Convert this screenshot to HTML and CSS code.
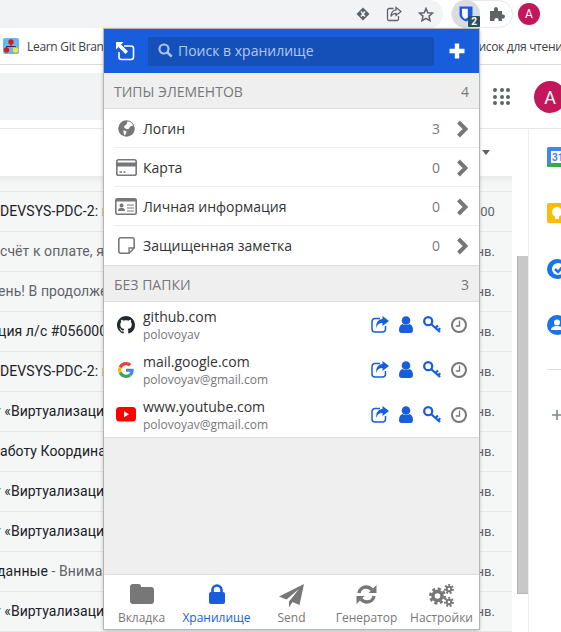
FILE: index.html
```html
<!DOCTYPE html>
<html lang="ru">
<head>
<meta charset="utf-8">
<title>Bitwarden</title>
<link rel="stylesheet" href="styles.css">
</head>
<body>
<svg class="defs" width="0" height="0">
  <defs>
    <symbol id="chev" viewBox="0 0 12 18"><path d="M2.500 2 9.500 9 2.500 16" fill="none" stroke="currentColor" stroke-width="4"/></symbol>
    <symbol id="share" viewBox="0 0 18 17"><path d="M9 2.500H4A3 3 0 0 0 1 5.500V13A3 3 0 0 0 4 16H11.500A3 3 0 0 0 14.500 13V10" fill="none" stroke="currentColor" stroke-width="1.500"/><path d="M11.500 0 18 5 11.500 10V7C8 7 6 8.500 5.500 12 4.500 7 7 3.300 11.500 3Z" fill="currentColor"/></symbol>
    <symbol id="user" viewBox="0 0 14 17"><circle cx="7" cy="4.500" r="4.300" fill="currentColor"/><path d="M0 14C0 10.500 1.500 8.500 3.500 8 5 9.300 9 9.300 10.500 8 12.500 8.500 14 10.500 14 14 14 16 13 17 11.500 17H2.500C1 17 0 16 0 14Z" fill="currentColor"/></symbol>
    <symbol id="key" viewBox="0 0 18 17"><circle cx="5.200" cy="5.200" r="4" fill="none" stroke="currentColor" stroke-width="2.300"/><path d="M8.300 8.300 17 16M12.500 12 15 9.500M15 14.300 17.300 12.200" fill="none" stroke="currentColor" stroke-width="2.200"/></symbol>
    <symbol id="clock" viewBox="0 0 16 16"><circle cx="8" cy="8" r="7" fill="none" stroke="currentColor" stroke-width="2"/><path d="M8.500 3.500V9H4.800" fill="none" stroke="currentColor" stroke-width="1.300"/></symbol>
  </defs>
</svg>

<header class="chrome-bar">
  <div class="omnibox">
    <svg class="omni-icon" width="14" height="14" viewBox="0 0 14 14"><path d="M7 .5 13.500 7 7 13.500 .5 7Z" fill="#5f6368"/><path d="M5 4.500 7 7 5 9.500M9 4.500 7 7 9 9.500" fill="none" stroke="#f1f3f4" stroke-width="1.400"/></svg>
    <svg class="omni-icon" width="16" height="16" viewBox="0 0 16 16"><path d="M7.500 2.500H3A1.500 1.500 0 0 0 1.500 4V13A1.500 1.500 0 0 0 3 14.500H11A1.500 1.500 0 0 0 12.500 13V10" fill="none" stroke="#5f6368" stroke-width="1.300"/><path d="M10 1.500 15 5.500 10 9.500V7.300C8 7.300 6 8.300 5 10.500 5 7 7 4 10 3.800Z" fill="none" stroke="#5f6368" stroke-width="1.300"/></svg>
    <svg class="omni-icon" width="16" height="15" viewBox="0 0 16 15"><path d="M8 1.500 9.800 5.700 14.500 6.100 11 9.100 12 13.700 8 11.300 4 13.700 5 9.100 1.500 6.100 6.200 5.700Z" fill="none" stroke="#5f6368" stroke-width="1.500"/></svg>
  </div>
  <div class="ext-pill">
    <div class="ext-active">
      <svg class="bw-logo" width="14" height="16" viewBox="0 0 14 16"><path d="M.5 .5H13.500V8.500C13.500 12 9.500 14.500 7 15.500 4.500 14.500 .5 12 .5 8.500Z" fill="#175ddc"/><path d="M3 2.800H8.800V11.500C7.800 12.200 6.500 12.800 6 13 5 12.300 3 11 3 8.500Z" fill="#fff"/></svg>
      <span class="ext-badge">2</span>
    </div>
    <svg class="ext-puzzle" width="16" height="16" viewBox="0 0 16 16"><path d="M1 5H5C4.500 2 6 1 7 1S9.500 2 9 5H13V8.500C15.500 8 16 9.500 16 10.500S15 13 13 12.500V15H9.500C10 13 9 12 7.500 12S5 13 5.500 15H1Z" fill="#5f6368"/></svg>
  </div>
  <span class="chrome-avatar">A</span>
</header>

<nav class="bookmarks">
  <svg class="bm-icon" width="16" height="16" viewBox="0 0 16 16"><rect width="16" height="16" rx="2" fill="#67b7f0"/><path d="M8 5V8M3.500 11V8.500H12.500V11" fill="none" stroke="#333" stroke-width="1"/><circle cx="8" cy="4" r="2.700" fill="#e8141a"/><circle cx="3.500" cy="12" r="2.700" fill="#e8141a"/><circle cx="12.500" cy="12" r="2.700" fill="#f3e62c"/></svg>
  <span class="bm-title">Learn Git Branching</span>
  <span class="bm-list">Список для чтения</span>
</nav>

<div class="gmail-head">
  <div class="gmail-search"></div>
  <div class="apps">
    <i></i><i></i><i></i><i></i><i></i><i></i><i></i><i></i><i></i>
  </div>
  <span class="gmail-avatar">A</span>
</div>

<div class="gmail-body">
  <main class="gmail-main">
    <div class="list-tools"><span class="caret"></span></div>
    <div class="list-area">
      <div class="mail-list">
        <div class="mail-top"></div>
        <div class="mail-row"><span class="subj">DEVSYS-PDC-2: проверка завершена успешно</span><span class="date">:00</span></div>
        <div class="mail-row grey"><span class="subj">счёт к оплате, я получил письмо</span><span class="date">нв.</span></div>
        <div class="mail-row grey"><span class="subj cut-e">ень! В продолжение нашего разговора</span><span class="date">нв.</span></div>
        <div class="mail-row"><span class="subj cut-c">ция л/с #056000 уведомление</span><span class="date">нв.</span></div>
        <div class="mail-row"><span class="subj">DEVSYS-PDC-2: проверка завершена успешно</span><span class="date">нв.</span></div>
        <div class="mail-row"><span class="subj cut-v">у «Виртуализация серверов»</span><span class="date">нв.</span></div>
        <div class="mail-row"><span class="subj cut-a">работу Координатора проекта</span><span class="date">нв.</span></div>
        <div class="mail-row"><span class="subj cut-v">у «Виртуализация серверов»</span><span class="date">нв.</span></div>
        <div class="mail-row"><span class="subj cut-v">у «Виртуализация серверов»</span><span class="date">нв.</span></div>
        <div class="mail-row"><span class="subj cut-d">данные <span class="snippet">- Внимание, обновите</span></span><span class="date">нв.</span></div>
        <div class="mail-row"><span class="subj cut-v">у «Виртуализация серверов»</span><span class="date">нв.</span></div>
      </div>
      <div class="scroll-track"><div class="scroll-thumb"></div></div>
    </div>
  </main>
  <aside class="side-apps">
    <svg class="side-icon" width="20" height="20" viewBox="0 0 20 20"><rect width="20" height="20" rx="1.500" fill="#4285f4"/><rect x="4" y="4" width="16" height="12" fill="#fff"/><rect y="16" width="20" height="4" fill="#34a853"/><text x="5" y="14" class="cal-num">31</text></svg>
    <svg class="side-icon" width="20" height="20" viewBox="0 0 20 20"><rect width="20" height="20" rx="2" fill="#fbbc04"/><circle cx="10" cy="9" r="5" fill="#fff"/><rect x="8" y="13" width="4" height="3" fill="#fff"/></svg>
    <svg class="side-icon" width="20" height="20" viewBox="0 0 20 20"><circle cx="10" cy="10" r="10" fill="#1a73e8"/><circle cx="11" cy="10" r="6" fill="#fff"/><path d="M8 10 11 13 17 6" fill="none" stroke="#1a73e8" stroke-width="2.500"/></svg>
    <svg class="side-icon" width="20" height="20" viewBox="0 0 20 20"><circle cx="10" cy="10" r="10" fill="#1a73e8"/><circle cx="10" cy="7.500" r="3" fill="#fff"/><path d="M4 15C4 12 7 11 10 11S16 12 16 15Z" fill="#fff"/></svg>
    <div class="side-rule"></div>
    <svg class="side-plus" width="12" height="12" viewBox="0 0 12 12"><path d="M6 1V11M1 6H11" stroke="#80868b" stroke-width="1.600" fill="none"/></svg>
  </aside>
</div>

<section class="popup">
  <header class="pop-head">
    <svg class="pop-out" width="20" height="20" viewBox="0 0 20 20"><path d="M9 5H16A2.500 2.500 0 0 1 18.500 7.500V16A2.500 2.500 0 0 1 16 18.500H6.500A2.500 2.500 0 0 1 4 16V11" fill="none" stroke="#fff" stroke-width="1.600"/><path d="M1 1H8.500L6 3.500 13 10.500 10.500 13 3.500 6 1 8.500Z" fill="#fff"/></svg>
    <div class="pop-search">
      <svg width="15" height="15" viewBox="0 0 15 15"><circle cx="6" cy="6" r="4.500" fill="none" stroke="#a9c3f2" stroke-width="2.200"/><path d="M9.500 9.500 13.700 13.700" stroke="#a9c3f2" stroke-width="2.600"/></svg>
      <span>Поиск в хранилище</span>
    </div>
    <svg class="pop-add" width="16" height="16" viewBox="0 0 16 16"><path d="M8 .5V15.500M.5 8H15.500" stroke="#fff" stroke-width="4.400" fill="none"/></svg>
  </header>

  <div class="pop-content">
    <div class="sec-head"><span>Типы элементов</span><span class="sec-count">4</span></div>
    <ul class="type-list">
      <li class="type-row">
        <span class="type-icon"><svg width="17" height="17" viewBox="0 0 17 17"><circle cx="8.500" cy="8.500" r="8.300" fill="#777"/><path d="M9 1.500C12 1 14.500 3 15 5.500 13.500 6.500 12 6 11.500 7.500 11 9 10 9.500 8.500 9 7 8.500 5.500 8 6.500 6 7.500 4.500 10 4.500 9 1.500ZM5.500 10.500C7 10.500 9 11 8.500 12.500 8 14 7 15.500 6.500 15.500 6 14 5 12 5.500 10.500Z" fill="#fff"/></svg></span>
        <span class="type-name">Логин</span><span class="type-num">3</span>
        <svg class="chev" width="12" height="18"><use href="#chev"/></svg>
      </li>
      <li class="type-row">
        <span class="type-icon"><svg width="21" height="17" viewBox="0 0 21 17"><rect x=".8" y=".8" width="19.400" height="15.400" rx="1.800" fill="none" stroke="#777" stroke-width="1.600"/><rect x="1" y="3.500" width="19" height="4" fill="#777"/><path d="M3.500 13H6M7.500 13H9.500" stroke="#777" stroke-width="1.300"/></svg></span>
        <span class="type-name">Карта</span><span class="type-num">0</span>
        <svg class="chev" width="12" height="18"><use href="#chev"/></svg>
      </li>
      <li class="type-row">
        <span class="type-icon"><svg width="22" height="17" viewBox="0 0 22 17"><rect x=".8" y=".8" width="20.400" height="15.400" rx="1.500" fill="none" stroke="#777" stroke-width="1.600"/><rect x="1" y="1" width="20" height="2.500" fill="#777"/><circle cx="6.500" cy="7.500" r="2" fill="#777"/><path d="M3 13C3 10.500 4.500 10 6.500 10S10 10.500 10 13Z" fill="#777"/><path d="M12 7H19M12 10H19M12 13H19" stroke="#777" stroke-width="1"/></svg></span>
        <span class="type-name">Личная информация</span><span class="type-num">0</span>
        <svg class="chev" width="12" height="18"><use href="#chev"/></svg>
      </li>
      <li class="type-row">
        <span class="type-icon"><svg width="17" height="17" viewBox="0 0 17 17"><path d="M3 .8H14A2.200 2.200 0 0 1 16.200 3V11L11 16.200H3A2.200 2.200 0 0 1 .8 14V3A2.200 2.200 0 0 1 3 .8Z" fill="none" stroke="#777" stroke-width="1.600"/><path d="M16 11H11V16" fill="none" stroke="#777" stroke-width="1.300"/></svg></span>
        <span class="type-name">Защищенная заметка</span><span class="type-num">0</span>
        <svg class="chev" width="12" height="18"><use href="#chev"/></svg>
      </li>
    </ul>

    <div class="sec-head"><span>Без папки</span><span class="sec-count">3</span></div>
    <ul class="site-list">
      <li class="site-row">
        <span class="site-icon"><svg width="18" height="18" viewBox="0 0 16 16"><path fill="#24292e" d="M8 0C3.580 0 0 3.580 0 8c0 3.540 2.290 6.530 5.470 7.590.4.070.55-.17.55-.38 0-.19-.01-.82-.01-1.490-2.010.37-2.530-.49-2.690-.94-.09-.23-.48-.94-.82-1.130-.28-.15-.68-.52-.01-.53.63-.01 1.080.58 1.230.82.72 1.210 1.870.87 2.330.66.07-.52.28-.87.51-1.070-1.780-.2-3.640-.89-3.640-3.950 0-.87.31-1.590.82-2.150-.08-.2-.36-1.020.08-2.120 0 0 .67-.21 2.200.82.64-.18 1.320-.27 2-.27.68 0 1.360.09 2 .27 1.530-1.040 2.200-.82 2.200-.82.44 1.100.16 1.920.08 2.120.51.56.82 1.270.82 2.150 0 3.070-1.870 3.750-3.650 3.950.29.25.54.73.54 1.480 0 1.070-.01 1.930-.01 2.200 0 .21.15.46.55.38A8.013 8.013 0 0016 8c0-4.420-3.580-8-8-8z"/></svg></span>
        <div class="site-text"><div class="site-name">github.com</div><div class="site-user">polovoyav</div></div>
        <div class="site-actions">
          <svg class="act-share" width="18" height="17"><use href="#share"/></svg>
          <svg class="act-user" width="14" height="17"><use href="#user"/></svg>
          <svg class="act-key" width="18" height="17"><use href="#key"/></svg>
          <svg class="act-clock" width="16" height="16"><use href="#clock"/></svg>
        </div>
      </li>
      <li class="site-row">
        <span class="site-icon"><svg width="16" height="16" viewBox="0 0 48 48"><path fill="#EA4335" d="M24 9.500c3.540 0 6.710 1.220 9.210 3.600l6.850-6.850C35.900 2.380 30.470 0 24 0 14.620 0 6.510 5.380 2.560 13.220l7.980 6.190C12.430 13.720 17.740 9.500 24 9.500z"/><path fill="#4285F4" d="M46.980 24.550c0-1.570-.15-3.090-.38-4.550H24v9.020h12.940c-.58 2.960-2.260 5.480-4.780 7.180l7.730 6c4.510-4.180 7.090-10.360 7.090-17.650z"/><path fill="#FBBC05" d="M10.530 28.590c-.48-1.450-.76-2.990-.76-4.590s.27-3.140.76-4.590l-7.980-6.190C.92 16.460 0 20.120 0 24c0 3.880.92 7.540 2.560 10.780l7.970-6.190z"/><path fill="#34A853" d="M24 48c6.480 0 11.930-2.130 15.890-5.810l-7.730-6c-2.150 1.450-4.920 2.300-8.160 2.300-6.260 0-11.570-4.220-13.470-9.910l-7.980 6.190C6.510 42.620 14.620 48 24 48z"/></svg></span>
        <div class="site-text"><div class="site-name">mail.google.com</div><div class="site-user">polovoyav@gmail.com</div></div>
        <div class="site-actions">
          <svg class="act-share" width="18" height="17"><use href="#share"/></svg>
          <svg class="act-user" width="14" height="17"><use href="#user"/></svg>
          <svg class="act-key" width="18" height="17"><use href="#key"/></svg>
          <svg class="act-clock" width="16" height="16"><use href="#clock"/></svg>
        </div>
      </li>
      <li class="site-row">
        <span class="site-icon"><svg width="20" height="15" viewBox="0 0 20 15"><rect width="20" height="14.500" rx="3.500" fill="#f00"/><path d="M8 4.300 13 7.250 8 10.200Z" fill="#fff"/></svg></span>
        <div class="site-text"><div class="site-name">www.youtube.com</div><div class="site-user">polovoyav@gmail.com</div></div>
        <div class="site-actions">
          <svg class="act-share" width="18" height="17"><use href="#share"/></svg>
          <svg class="act-user" width="14" height="17"><use href="#user"/></svg>
          <svg class="act-key" width="18" height="17"><use href="#key"/></svg>
          <svg class="act-clock" width="16" height="16"><use href="#clock"/></svg>
        </div>
      </li>
    </ul>
  </div>

  <footer class="pop-tabs">
    <div class="tab">
      <svg width="24" height="20" viewBox="0 0 24 20"><path d="M3 0H8.500A2.500 2.500 0 0 1 11 2.500V3H21A3 3 0 0 1 24 6V17A3 3 0 0 1 21 20H3A3 3 0 0 1 0 17V3A3 3 0 0 1 3 0Z" fill="#777"/></svg>
      <span>Вкладка</span>
    </div>
    <div class="tab tab-on">
      <svg width="16" height="20" viewBox="0 0 16 20"><path d="M3.500 9V6A4.500 4.500 0 0 1 12.500 6V9" fill="none" stroke="#175ddc" stroke-width="2.600"/><rect y="8" width="16" height="12" rx="2" fill="#175ddc"/></svg>
      <span>Хранилище</span>
    </div>
    <div class="tab">
      <svg width="25" height="24" viewBox="0 0 25 24"><path d="M25 0 20.500 21 13.500 18 10 23.500V17.500L20 5 7.500 15.500 0 12.500Z" fill="#777"/></svg>
      <span>Send</span>
    </div>
    <div class="tab">
      <svg width="21" height="21" viewBox="0 0 21 21"><path d="M3 9C3.500 5.500 6.500 3 10 3 12.500 3 14.500 4 16 5.800" fill="none" stroke="#777" stroke-width="3.400"/><path d="M20.500 1V9H12.500Z" fill="#777"/><path d="M18 12C17.500 15.500 14.500 18 11 18 8.500 18 6.500 17 5 15.200" fill="none" stroke="#777" stroke-width="3.400"/><path d="M.5 20V12H8.500Z" fill="#777"/></svg>
      <span>Генератор</span>
    </div>
    <div class="tab">
      <svg width="26" height="23" viewBox="0 0 26 23"><g fill="none" stroke="#777"><circle cx="8.500" cy="12" r="4.500" stroke-width="3.400"/><circle cx="8.500" cy="12" r="7.200" stroke-width="2.600" stroke-dasharray="3.200 2.450"/><circle cx="20" cy="5" r="2.300" stroke-width="2"/><circle cx="20" cy="5" r="4.100" stroke-width="1.800" stroke-dasharray="2 1.600"/><circle cx="20" cy="18" r="2.300" stroke-width="2"/><circle cx="20" cy="18" r="4.100" stroke-width="1.800" stroke-dasharray="2 1.600"/></g></svg>
      <span>Настройки</span>
    </div>
  </footer>
</section>
</body>
</html>
```
FILE: styles.css
```css
* { box-sizing: border-box; }
html, body { margin: 0; padding: 0; }
body {
  position: relative;
  width: 561px;
  height: 632px;
  overflow: hidden;
  background: #fff;
  font-family: "Open Sans", sans-serif;
  color: #202124;
}
ul { list-style: none; margin: 0; padding: 0; }
.defs { position: absolute; }

/* Browser chrome */
.chrome-bar { display: flex; align-items: center; height: 28px; background: #fff; }
.omnibox {
  display: flex; align-items: center; justify-content: flex-end; gap: 16px;
  flex: none; width: 443px; height: 28px; padding-right: 9px;
  background: #f1f3f4; border-radius: 0 14px 14px 0;
}
.ext-pill {
  display: flex; align-items: center; gap: 9px; flex: none;
  width: 62px; height: 28px; margin-left: 8px;
  border: 1px solid #e8eaed; border-radius: 14px;
}
.ext-active {
  position: relative; display: flex; align-items: center; justify-content: center;
  width: 28px; height: 28px; border-radius: 50%; background: #dadce0; flex: none;
}
.bw-logo { flex: none; margin-top: -1px; }
.ext-badge {
  position: absolute; left: 16px; top: 16px; width: 12px; height: 11px;
  background: #2d4f63; border-radius: 1px; color: #fff;
  font: 700 10px/11px "Roboto", sans-serif; text-align: center;
}
.chrome-avatar {
  display: flex; align-items: center; justify-content: center; flex: none;
  width: 22px; height: 22px; margin-left: 5px; border-radius: 50%;
  background: #c2185b; color: #fff; font: 400 12px "Roboto", sans-serif;
}

.bookmarks {
  display: flex; align-items: center; height: 37px; padding-left: 3px;
  background: #fff; border-bottom: 1px solid #dadce0;
  font-size: 12px; color: #3c4043; white-space: nowrap; letter-spacing: -.3px;
}
.bm-icon { flex: none; }
.bm-title { flex: none; margin-left: 8px; width: 77px; overflow: hidden; }
.bm-list { flex: none; margin-left: 376px; width: 81px; overflow: hidden; text-indent: -16px; }

.gmail-head { display: flex; height: 64px; padding-top: 8px; background: #fff; border-bottom: 1px solid #e5e7e9; }
.gmail-search { flex: none; width: 470px; height: 47px; background: #f1f3f4; }
.apps {
  display: grid; grid-template-columns: repeat(3, 4px); gap: 2.500px; flex: none;
  width: 17px; height: 17px; margin: 15px 0 0 23px;
}
.apps i { width: 4px; height: 4px; border-radius: 50%; background: #5f6368; }
.gmail-avatar {
  display: flex; align-items: center; justify-content: center; flex: none;
  width: 32px; height: 32px; margin: 8px 0 0 24px; border-radius: 50%;
  background: #c2185b; color: #fff; font: 400 18px "Roboto", sans-serif;
}

/* Gmail */
.gmail-body { display: flex; height: 503px; }
.gmail-main { flex: none; width: 529px; border-right: 1px solid #eceef0; }
.list-tools { position: relative; height: 47px; }
.caret {
  position: absolute; left: 482px; top: 21px;
  border: 4px solid transparent; border-top: 5px solid #5f6368; border-bottom: 0;
}
.list-area { display: flex; }
.mail-list { flex: none; width: 512px; background: #f5f7f7; }
.mail-top { height: 16px; background: linear-gradient(#e9ebeb, #f5f7f7 8px); border-bottom: 1px solid #e4e8ea; }
.mail-row {
  display: flex; justify-content: space-between; align-items: center;
  height: 40px; padding-right: 17px; overflow: hidden;
  border-bottom: 1px solid #e4e8ea; white-space: nowrap;
  font: 14px/1.2 "Roboto", sans-serif; letter-spacing: .08px; color: #202124;
}
.mail-row.grey, .snippet { color: #5f6368; }
.subj { flex: none; width: 104px; overflow: hidden; }
.cut-v { text-indent: -6px; }
.cut-a { text-indent: -8px; }
.cut-d { text-indent: -3px; }
.cut-e { text-indent: -2px; }
.cut-c { text-indent: -2px; }
.date { flex: none; font-size: 13px; color: #5f6368; }
.scroll-track { flex: none; width: 16px; padding: 80px 0 0 5px; }
.scroll-thumb { width: 11px; height: 338px; background: #c8c8c8; border-left: 1px solid #b5b5b5; border-bottom: 1px solid #b5b5b5; }

.side-apps { display: flex; flex-direction: column; padding: 18px 0 0 18px; width: 32px; flex: none; }
.side-icon { flex: none; margin-bottom: 36px; }
.cal-num { font: 700 10px "Roboto", sans-serif; fill: #4285f4; }
.side-rule { width: 20px; height: 1px; margin-top: -2px; background: #dadce0; }
.side-plus { flex: none; margin: 39px 0 0 4px; }

/* Popup */
.popup {
  position: absolute; left: 104px; top: 29px;
  display: flex; flex-direction: column;
  width: 375px; height: 600px;
  background: #efefef;
  box-shadow: 0 0 0 1px #b5b5b5, 0 1px 4px rgba(0,0,0,.35);
}
.pop-head {
  display: flex; align-items: center; flex: none;
  height: 44px; padding: 0 14px 0 11px; background: #175ddc;
}
.pop-out { flex: none; }
.pop-search {
  display: flex; align-items: center; gap: 5px;
  width: 287px; height: 29px; margin-left: 13px; padding: 0 0 1px 10px;
  background: #1550b8; border-radius: 2px;
  font-size: 14px; color: #b3c9f3;
}
.pop-add { margin-left: 15px; flex: none; }
.pop-content { flex: 1; }
.sec-head {
  display: flex; justify-content: space-between; align-items: center;
  height: 36px; padding: 2px 10px 0;
  border-bottom: 1px solid #dedede;
  font-size: 14px; color: #777; text-transform: uppercase;
}
.type-list { background: #fff; border-bottom: 1px solid #dedede; }
.type-row {
  position: relative; display: flex; align-items: center;
  height: 39px; padding: 0 11px 0 10px; font-size: 14px;
}
.type-row + .type-row::before {
  content: ""; position: absolute; left: 10px; right: 0; top: -1px; height: 1px; background: #efefef;
}
.type-icon { display: flex; justify-content: center; width: 24px; margin-right: 5px; flex: none; }
.type-name { flex: 1; color: #333; }
.type-num { color: #777; margin-right: 16px; }
.chev { color: #777; flex: none; }

.site-list { background: #fff; border-bottom: 1px solid #dedede; }
.site-row { display: flex; align-items: center; height: 45px; padding: 0 12px 0 10px; }
.site-icon { display: flex; justify-content: center; width: 24px; margin-right: 5px; flex: none; }
.site-text { flex: 1; }
.site-name { font-size: 14px; line-height: 19px; color: #333; }
.site-user { font-size: 12px; line-height: 17px; color: #777; }
.site-actions { display: flex; align-items: center; gap: 10px; }
.act-share, .act-user, .act-key { color: #175ddc; }
.act-clock { color: #777; }

.pop-tabs {
  display: grid; grid-template-columns: repeat(5, 1fr); flex: none;
  height: 55px; background: #fff; border-top: 1px solid #dedede;
}
.tab {
  display: flex; flex-direction: column; align-items: center; justify-content: space-between;
  padding: 9px 0 3px; font-size: 12px; color: #777; white-space: nowrap;
}
.tab-on { color: #175ddc; }
```
